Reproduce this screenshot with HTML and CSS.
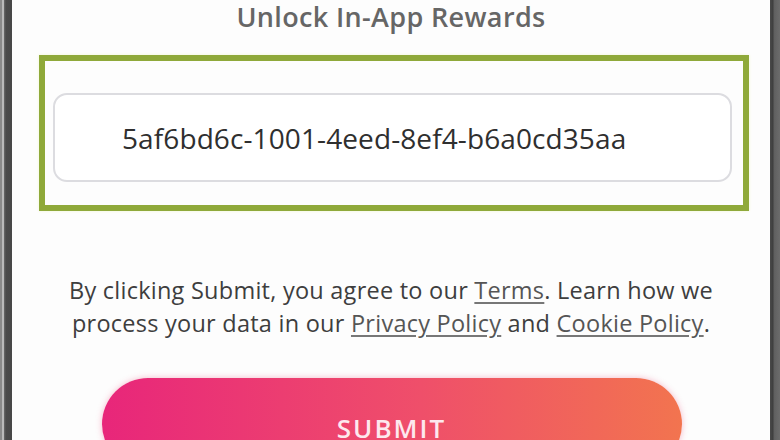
FILE: index.html
```html
<!DOCTYPE html>
<html lang="en">
<head>
    <meta charset="UTF-8">
    <title>Unlock In-App Rewards</title>
    <link rel="stylesheet" href="styles.css">
</head>
<body>
    <div class="phone">
        <div class="edgeLeft"></div>
        <div class="screen">
            <h1 class="title">Unlock In-App Rewards</h1>
            <div class="highlight">
                <div class="codeBox">5af6bd6c-1001-4eed-8ef4-b6a0cd35aa</div>
            </div>
            <p class="legal">
                By clicking Submit, you agree to our <a href="#">Terms</a>. Learn how we<br>
                process your data in our <a href="#">Privacy Policy</a> and <a href="#">Cookie Policy</a>.
            </p>
            <div class="btnWrap">
                <button class="submit">SUBMIT</button>
            </div>
        </div>
        <div class="edgeRight"></div>
    </div>
</body>
</html>
```

FILE: styles.css
```css
*{margin:0;padding:0;box-sizing:border-box;}
body {
    width:780px;
    height:440px;
    overflow:hidden;
    font-family:"Open Sans","Liberation Sans",sans-serif;
    background:#fff;
}
.phone {
    display:flex;
    height:440px;
    overflow:hidden;
}
.edgeLeft {
    width:12px;
    background:linear-gradient(to right,#8a8a8a 0,#8a8a8a 2px,#b9b9b9 2px,#b9b9b9 4px,#6a6a6a 4px,#4a4a4a 6px,#474747 12px);
}
.edgeRight {
    width:10px;
    background:linear-gradient(to right,#4a4a4a 0,#3e3e3e 3px,#5f5f5f 4px,#6c6c6c 10px);
}
.screen {
    flex:1;
    background:#fdfdfd;
    display:flex;
    flex-direction:column;
    overflow:hidden;
}
.screen > * {
    flex-shrink:0;
}
.title {
    font-size:27px;
    line-height:34px;
    font-weight:600;
    color:#666;
    text-align:center;
    letter-spacing:0.35px;
}
.highlight {
    margin:21px 21px 0 27px;
    height:156px;
    border:6px solid #8fa93a;
    padding:32px 11px 0 8px;
    box-shadow:0 0 3px #f1f6d6;
}
.codeBox {
    height:89px;
    border:2px solid #dcdce0;
    border-radius:14px;
    background:#fff;
    display:flex;
    align-items:center;
    padding-left:67px;
    font-size:28px;
    letter-spacing:0.1px;
    color:#2f2f2f;
}
.legal {
    margin-top:63px;
    font-size:23.5px;
    line-height:33px;
    color:#3e3e3e;
    text-align:center;
    letter-spacing:0.25px;
}
.legal a {
    color:#555;
    text-decoration:underline;
    text-decoration-color:#777;
    text-underline-offset:3px;
}
.btnWrap {
    margin-top:38px;
    display:flex;
    justify-content:center;
}
.submit {
    width:580px;
    height:92px;
    padding-top:7px;
    border:none;
    border-radius:46px;
    background:linear-gradient(to right,#e8267a,#ef4f6a 55%,#f2744f);
    box-shadow:0 0 6px rgba(232,60,110,0.35);
    color:#fde8ee;
    font-family:"Open Sans","Liberation Sans",sans-serif;
    font-size:26px;
    font-weight:600;
    letter-spacing:2px;
    margin-left:1px;
}
```
